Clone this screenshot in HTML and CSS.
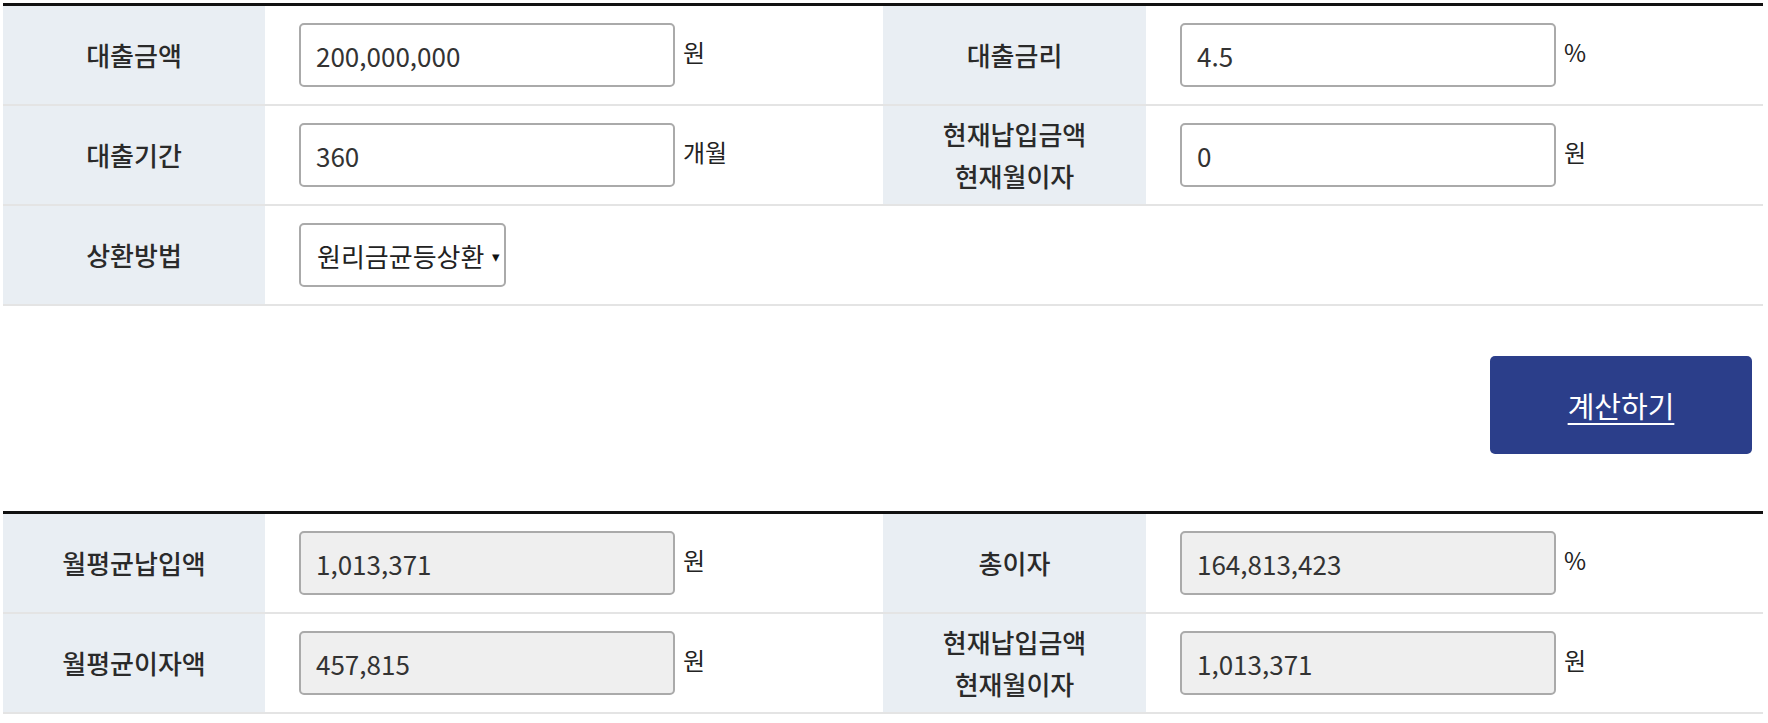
FILE: index.html
```html
<!DOCTYPE html>
<html lang="ko">
<head>
  <meta charset="UTF-8">
  <title>대출이자 계산기</title>
  <link rel="stylesheet" href="styles.css">
</head>
<body>

  <div class="wrap">
    <table class="calc-table">
      <colgroup>
        <col class="col-th1"><col class="col-td1"><col class="col-th2"><col>
      </colgroup>
      <tr>
        <th>대출금액</th>
        <td><input type="text" class="field" value="200,000,000"><span class="unit">원</span></td>
        <th>대출금리</th>
        <td><input type="text" class="field" value="4.5"><span class="unit">%</span></td>
      </tr>
      <tr>
        <th>대출기간</th>
        <td><input type="text" class="field" value="360"><span class="unit">개월</span></td>
        <th>현재납입금액<br>현재월이자</th>
        <td><input type="text" class="field" value="0"><span class="unit">원</span></td>
      </tr>
      <tr>
        <th>상환방법</th>
        <td colspan="3">
          <span class="select-wrap">
            <select class="method">
              <option>원리금균등상환</option>
              <option>원금균등상환</option>
              <option>만기일시상환</option>
            </select>
          </span>
        </td>
      </tr>
    </table>

    <div class="btn-area">
      <button type="button" class="btn-calc">계산하기</button>
    </div>

    <table class="calc-table">
      <colgroup>
        <col class="col-th1"><col class="col-td1"><col class="col-th2"><col>
      </colgroup>
      <tr>
        <th>월평균납입액</th>
        <td><input type="text" class="field readonly" value="1,013,371" readonly><span class="unit">원</span></td>
        <th>총이자</th>
        <td><input type="text" class="field readonly" value="164,813,423" readonly><span class="unit">%</span></td>
      </tr>
      <tr>
        <th>월평균이자액</th>
        <td><input type="text" class="field readonly" value="457,815" readonly><span class="unit">원</span></td>
        <th>현재납입금액<br>현재월이자</th>
        <td><input type="text" class="field readonly" value="1,013,371" readonly><span class="unit">원</span></td>
      </tr>
    </table>
  </div>

</body>
</html>
```

FILE: styles.css
```css
body {
  margin: 0;
  font-family: "Noto Sans CJK KR", "Noto Sans", sans-serif;
  color: #222;
  background: #fff;
}

.wrap {
  padding: 3px 5px 0 3px;
}

.calc-table {
  width: 100%;
  border-collapse: collapse;
  table-layout: fixed;
  border-top: 3px solid #111;
}

.col-th1 { width: 262px; }
.col-td1 { width: 618px; }
.col-th2 { width: 263px; }

.calc-table th,
.calc-table td {
  height: 98px;
  padding: 0;
  border-bottom: 2px solid #e4e4e4;
  vertical-align: middle;
  font-size: 24px;
}

.calc-table th {
  background-color: #e9eef3;
  font-size: 26px;
  font-weight: 500;
  line-height: 42px;
  color: #2a2a2a;
}

.calc-table td {
  padding-left: 34px;
}

.field {
  box-sizing: border-box;
  width: 376px;
  height: 64px;
  padding: 0 15px;
  border: 2px solid #aaa;
  border-radius: 5px;
  font-family: inherit;
  font-size: 26px;
  color: #333;
  background: #fff;
  vertical-align: middle;
}

.field.readonly {
  background: #efefef;
}

.unit {
  display: inline-block;
  margin-left: 8px;
  vertical-align: middle;
  position: relative;
  top: -4px;
  color: #222;
}

.select-wrap {
  position: relative;
  display: inline-block;
  vertical-align: middle;
}

.select-wrap::after {
  content: "▾";
  position: absolute;
  right: 6px;
  top: 50%;
  transform: translateY(-50%);
  font-size: 15px;
  color: #111;
  pointer-events: none;
}

.method {
  appearance: none;
  -webkit-appearance: none;
  box-sizing: border-box;
  height: 64px;
  padding: 0 19px 0 16px;
  border: 2px solid #aaa;
  border-radius: 5px;
  font-family: inherit;
  font-size: 26px;
  color: #222;
  background: #fff;
}

.btn-area {
  display: flex;
  justify-content: flex-end;
  padding: 50px 11px 57px 0;
}

.btn-calc {
  width: 262px;
  height: 98px;
  border: 0;
  border-radius: 5px;
  background-color: #2b3e8a;
  color: #fff;
  font-family: inherit;
  font-size: 29px;
  text-decoration: underline;
  text-underline-offset: 5px;
  cursor: pointer;
}
```
